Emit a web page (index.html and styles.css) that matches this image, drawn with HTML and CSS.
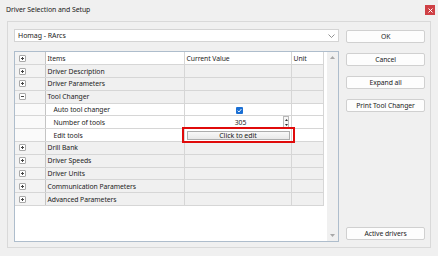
FILE: index.html
```html
<!DOCTYPE html>
<html lang="en">
<head>
    <meta charset="UTF-8">
    <meta name="viewport" content="width=device-width, initial-scale=1.0">
    <title>Driver Selection and Setup</title>
    <link rel="stylesheet" href="styles.css">
</head>
<body>
    <div id="window">
        <div class="titlebar">
            <span class="title">Driver Selection and Setup</span>
            <div class="close">
                <svg width="5" height="5" viewBox="0 0 5 5"><path d="M0.5 0.5L4.5 4.5M4.5 0.5L0.5 4.5" stroke="#fff" stroke-width="1"/></svg>
            </div>
        </div>

        <div class="panel">
            <div class="left">
                <div class="combo">
                    <span>Homag - RArcs</span>
                    <svg width="7" height="4" viewBox="0 0 7 4"><path d="M0.5 0.5L3.5 3.5L6.5 0.5" fill="none" stroke="#777" stroke-width="0.8"/></svg>
                </div>

                <div class="grid">
                    <table>
                        <tr class="head">
                            <td class="exp"><i class="plus"></i></td>
                            <td>Items</td>
                            <td>Current Value</td>
                            <td>Unit</td>
                        </tr>
                        <tr class="group">
                            <td class="exp"><i class="plus"></i></td>
                            <td>Driver Description</td><td></td><td></td>
                        </tr>
                        <tr class="group">
                            <td class="exp"><i class="plus"></i></td>
                            <td>Driver Parameters</td><td></td><td></td>
                        </tr>
                        <tr class="group">
                            <td class="exp"><i class="plus minus"></i></td>
                            <td>Tool Changer</td><td></td><td></td>
                        </tr>
                        <tr class="child">
                            <td class="exp"></td>
                            <td class="sub">Auto tool changer</td>
                            <td class="center">
                                <span class="check">
                                    <svg width="7" height="7" viewBox="0 0 7 7"><path d="M1.6 3.6L3 5L5.4 2" fill="none" stroke="#fff" stroke-width="0.9"/></svg>
                                </span>
                            </td>
                            <td></td>
                        </tr>
                        <tr class="child">
                            <td class="exp"></td>
                            <td class="sub">Number of tools</td>
                            <td class="num">
                                <span class="numval">305</span>
                                <span class="spin">
                                    <svg width="5" height="11" viewBox="0 0 5 11"><path d="M2.5 2L4 4H1Z M2.5 9L4 7H1Z" fill="#333"/></svg>
                                </span>
                            </td>
                            <td></td>
                        </tr>
                        <tr class="child">
                            <td class="exp"></td>
                            <td class="sub">Edit tools</td>
                            <td class="editcell">
                                <div class="editbtn">Click to edit</div>
                                <div class="highlight"></div>
                            </td>
                            <td></td>
                        </tr>
                        <tr class="group">
                            <td class="exp"><i class="plus"></i></td>
                            <td>Drill Bank</td><td></td><td></td>
                        </tr>
                        <tr class="group">
                            <td class="exp"><i class="plus"></i></td>
                            <td>Driver Speeds</td><td></td><td></td>
                        </tr>
                        <tr class="group">
                            <td class="exp"><i class="plus"></i></td>
                            <td>Driver Units</td><td></td><td></td>
                        </tr>
                        <tr class="group">
                            <td class="exp"><i class="plus"></i></td>
                            <td>Communication Parameters</td><td></td><td></td>
                        </tr>
                        <tr class="group">
                            <td class="exp"><i class="plus"></i></td>
                            <td>Advanced Parameters</td><td></td><td></td>
                        </tr>
                    </table>
                    <div class="scrollbar">
                        <svg width="7" height="5" viewBox="0 0 7 5"><path d="M3.5 1L6 4H1Z" fill="#a8a8a8"/></svg>
                        <svg width="7" height="5" viewBox="0 0 7 5"><path d="M3.5 4L6 1H1Z" fill="#a8a8a8"/></svg>
                    </div>
                </div>
            </div>

            <div class="buttons">
                <div class="btn">OK</div>
                <div class="btn">Cancel</div>
                <div class="btn">Expand all</div>
                <div class="btn">Print Tool Changer</div>
                <div class="spacer"></div>
                <div class="btn">Active drivers</div>
            </div>
        </div>
    </div>
</body>
</html>
```

FILE: styles.css
```css
*{
    box-sizing: border-box;
}
body{
    margin: 0;
    font-family: "Noto Sans", "Open Sans", sans-serif;
    font-size: 6.8px;
    letter-spacing: -0.05px;
    color: #1b1b1b;
}
#window{
    width: 438px;
    height: 256px;
    background-color: #f0f0f0;
    padding: 0 7px 8px 6px;
    display: flex;
    flex-direction: column;
    border-left: 1px solid #f0f0f0;
}
.titlebar{
    height: 22px;
    display: flex;
    align-items: center;
    justify-content: space-between;
    padding-bottom: 2px;
}
.title{
    font-size: 6.9px;
    margin-left: -1px;
}
.close{
    width: 10px;
    height: 10px;
    background-color: #cf4045;
    display: flex;
    align-items: center;
    justify-content: center;
    margin-right: -4px;
    margin-bottom: -1px;
}
.panel{
    flex: 1;
    border: 1px solid #d9d9d9;
    display: flex;
    padding: 7px 5px 5px 6px;
}
.left{
    width: 326px;
    display: flex;
    flex-direction: column;
}
.combo{
    height: 13px;
    background-color: #fff;
    border: 1px solid #d4d4d4;
    display: flex;
    align-items: center;
    justify-content: space-between;
    padding: 0 3px 0 3px;
    font-size: 7px;
}
.grid{
    margin-top: 9px;
    height: 191px;
    border: 1px solid #aebdcc;
    background-color: #fff;
    display: flex;
    justify-content: space-between;
}
table{
    border-collapse: collapse;
    width: 308px;
    align-self: flex-start;
    table-layout: fixed;
}
td{
    height: 12.8px;
    padding: 0 0 0 2px;
    border-right: 1px solid #d6d6d6;
    border-bottom: 1px solid #d6d6d6;
    white-space: nowrap;
    line-height: 11px;
}
td:nth-child(1){ width: 30px; }
td:nth-child(2){ width: 139px; }
td:nth-child(3){ width: 107px; }
td:nth-child(4){ width: 32px; }
.head td{
    background-color: #fff;
}
.group td{
    background-color: #f0f0f0;
}
.child td{
    background-color: #fff;
}
td.exp{
    background-color: #f3f3f3;
    border-right: 1px solid #c4c4c4;
    padding-left: 4px;
}
.child td.exp{
    background-color: #fafafa;
}
td.sub{
    padding-left: 8px;
}
.plus{
    display: block;
    width: 7px;
    height: 7px;
    border: 1px solid #a8a8a8;
    border-radius: 1px;
    background: #fff;
    position: relative;
}
.plus::before,
.plus::after{
    content: "";
    position: absolute;
    background-color: #444;
}
.plus::before{
    left: 1px;
    top: 2px;
    width: 3px;
    height: 1px;
}
.plus::after{
    left: 2px;
    top: 1px;
    width: 1px;
    height: 3px;
}
.minus::after{
    display: none;
}
.center{
    text-align: center;
}
.check{
    display: inline-block;
    width: 7px;
    height: 7px;
    background-color: #1a6fd4;
    border-radius: 1px;
    vertical-align: middle;
    margin-left: 1px;
    line-height: 0;
}
.num{
    position: relative;
    text-align: center;
}
.numval{
    margin-left: 4px;
}
.spin{
    position: absolute;
    right: 2px;
    top: 0;
    width: 6px;
    height: 12px;
    border: 1px solid #b9b9b9;
    background: #f7f7f7;
    line-height: 0;
}
.editcell{
    position: relative;
    padding: 0 1px 0 2px;
}
.editbtn{
    height: 9px;
    border: 1px solid #adadad;
    background: linear-gradient(#f8f8f8, #e9e9e9);
    text-align: center;
    line-height: 7px;
    font-size: 7px;
}
.highlight{
    position: absolute;
    left: -3px;
    top: -2px;
    width: 113px;
    height: 16px;
    border: 2px solid #e00b0b;
}
.scrollbar{
    width: 11px;
    background-color: #f0f0f0;
    display: flex;
    flex-direction: column;
    justify-content: space-between;
    align-items: center;
    padding: 3px 0 3px 0;
}
.buttons{
    margin-left: 7px;
    width: 79px;
    display: flex;
    flex-direction: column;
    padding-top: 1px;
}
.btn{
    height: 13px;
    background-color: #fdfdfd;
    border: 1px solid #d0d0d0;
    border-radius: 2px;
    text-align: center;
    line-height: 11px;
    margin-bottom: 10px;
}
.spacer{
    flex: 1;
}
.buttons .btn:last-child{
    margin-bottom: 2px;
}
```
